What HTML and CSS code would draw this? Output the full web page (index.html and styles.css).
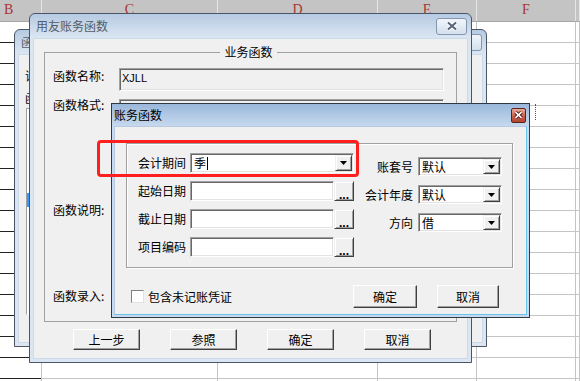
FILE: index.html
```html
<!DOCTYPE html>
<html lang="zh-CN">
  <head>
    <meta charset="UTF-8" />
    <title>账务函数</title>
    <link rel="stylesheet" href="styles.css">
  </head>
  <body>
    <!-- 背后的表格 -->
    <div class="sheet">
      <div class="sheet-head">
        <div class="col col-b">B</div>
        <div class="col col-c">C</div>
        <div class="col col-d">D</div>
        <div class="col col-e">E</div>
        <div class="col col-f">F</div>
        <div class="col col-g"></div>
      </div>
      <div class="sheet-body">
        <div class="col col-b"></div>
        <div class="col col-c"></div>
        <div class="col col-d"></div>
        <div class="col col-e"></div>
        <div class="col col-f"></div>
        <div class="col col-g"></div>
      </div>
    </div>
    <div class="page-break"></div>

    <!-- 函数向导（被挡住的窗口） -->
    <div class="win win-back">
      <div class="titlebar">
        <span class="title">函数</span>
        <span class="close">
          <svg width="12" height="10" viewBox="0 0 12 10"><path d="M2 1.5L10 8.5M10 1.5L2 8.5" stroke="#fff" stroke-width="4"/><path d="M2 1.5L10 8.5M10 1.5L2 8.5" stroke="#56657a" stroke-width="2"/></svg>
        </span>
      </div>
      <div class="client back-client">
        <div class="back-label">请选</div>
        <div class="back-label back-label-last">函数</div>
        <ul class="list">
          <li></li>
          <li></li>
          <li></li>
          <li></li>
          <li></li>
          <li></li>
          <li class="sel"></li>
          <li></li>
        </ul>
      </div>
    </div>

    <!-- 用友账务函数 -->
    <div class="win win-main">
      <div class="titlebar">
        <span class="title">用友账务函数</span>
        <span class="close">
          <svg width="12" height="10" viewBox="0 0 12 10"><path d="M2 1.5L10 8.5M10 1.5L2 8.5" stroke="#fff" stroke-width="4"/><path d="M2 1.5L10 8.5M10 1.5L2 8.5" stroke="#56657a" stroke-width="2"/></svg>
        </span>
      </div>
      <div class="client main-client">
        <fieldset class="group">
          <legend>业务函数</legend>
          <div class="form-grid">
            <span class="lbl">函数名称:</span>
            <div class="edit edit-name">XJLL</div>
            <span class="lbl lbl-up">函数格式:</span>
            <div class="edit edit-format">现金流量项目金额(方向,项目编码,会计期间,账套号,会计年度)</div>
            <span class="lbl lbl-mid">函数说明:</span>
            <div class="edit edit-desc"></div>
            <span class="lbl lbl-mid">函数录入:</span>
            <div class="edit edit-entry"></div>
          </div>
        </fieldset>
        <div class="main-buttons">
          <button class="btn">上一步</button>
          <button class="btn">参照</button>
          <button class="btn">确定</button>
          <button class="btn">取消</button>
        </div>
      </div>
    </div>

    <!-- 账务函数 -->
    <div class="win win-dlg">
      <div class="titlebar">
        <span class="title">账务函数</span>
        <span class="close close-red">
          <svg width="9" height="8" viewBox="0 0 9 8"><path d="M1.5 1.2L7.5 6.8M7.5 1.2L1.5 6.8" stroke="#4a1a14" stroke-width="3.4"/><path d="M1.5 1.2L7.5 6.8M7.5 1.2L1.5 6.8" stroke="#fff" stroke-width="1.6"/></svg>
        </span>
      </div>
      <div class="client dlg-client">
        <div class="dlg-group">
          <div class="dlg-left">
            <span class="lbl">会计期间</span>
            <div class="edit combo">
              <span class="combo-text">季<span class="caret"></span></span>
              <span class="drop"><svg width="7" height="4" viewBox="0 0 7 4"><path d="M0 0h7L3.5 4z"/></svg></span>
            </div>
            <span class="lbl">起始日期</span>
            <div class="picker"><div class="edit"></div><button class="dots">...</button></div>
            <span class="lbl">截止日期</span>
            <div class="picker"><div class="edit"></div><button class="dots">...</button></div>
            <span class="lbl">项目编码</span>
            <div class="picker"><div class="edit"></div><button class="dots">...</button></div>
          </div>
          <div class="dlg-right">
            <span class="lbl">账套号</span>
            <div class="edit combo">
              <span class="combo-text">默认</span>
              <span class="drop"><svg width="7" height="4" viewBox="0 0 7 4"><path d="M0 0h7L3.5 4z"/></svg></span>
            </div>
            <span class="lbl">会计年度</span>
            <div class="edit combo">
              <span class="combo-text">默认</span>
              <span class="drop"><svg width="7" height="4" viewBox="0 0 7 4"><path d="M0 0h7L3.5 4z"/></svg></span>
            </div>
            <span class="lbl">方向</span>
            <div class="edit combo">
              <span class="combo-text">借</span>
              <span class="drop"><svg width="7" height="4" viewBox="0 0 7 4"><path d="M0 0h7L3.5 4z"/></svg></span>
            </div>
          </div>
        </div>
        <div class="dlg-bottom">
          <label class="check"><input type="checkbox">包含未记账凭证</label>
          <button class="btn btn-ok">确定</button>
          <button class="btn btn-cancel">取消</button>
        </div>
      </div>
    </div>

    <div class="mark"></div>
  </body>
</html>
```

FILE: styles.css
```css
* {
  box-sizing: border-box;
}
body {
  margin: 0;
  width: 580px;
  height: 381px;
  overflow: hidden;
  position: relative;
  background: #fff;
  font-family: "Noto Sans CJK SC", sans-serif;
  font-size: 12px;
  line-height: 16px;
  color: #000;
}

/* 表格 */
.sheet {
  display: flex;
  flex-direction: column;
  height: 100%;
}
.sheet-head {
  display: flex;
  height: 22px;
  background: #c4c4c4;
  border-bottom: 1px solid #a6a6a6;
  font-family: "Liberation Serif", serif;
  font-size: 14px;
  line-height: 19px;
  color: #a83434;
}
.sheet-head .col {
  border-right: 1px solid #e6e6e6;
  text-align: center;
}
.sheet-head .col-b {
  text-align: left;
  padding-left: 4px;
}
.sheet-body {
  display: flex;
  flex: 1;
}
.sheet-body .col {
  border-right: 1px solid #c4c4c4;
  background: repeating-linear-gradient(to bottom, transparent 0 20px, #c4c4c4 20px 21px);
}
.sheet-body .col-b {
  background: repeating-linear-gradient(to bottom, transparent 0 20px, #222 20px 21px);
}
.col-b { width: 42px; }
.col-c { width: 176px; }
.col-d { width: 160px; }
.col-e { width: 99px; }
.col-f { width: 99px; }
.col-g { flex: 1; }
.page-break {
  position: absolute;
  left: 535px;
  top: 104px;
  height: 16px;
  border-left: 1px dotted #d02020;
}

/* 窗口 */
.win {
  position: absolute;
  display: flex;
  flex-direction: column;
  border: 1px solid #4a5565;
  border-radius: 6px 6px 0 0;
  padding: 0 3px 3px;
  background: linear-gradient(#b6cae2, #dbe6f2 24px);
}
.win-back {
  left: 14px;
  top: 29px;
  width: 473px;
  height: 318px;
}
.win-main {
  left: 29px;
  top: 13px;
  width: 443px;
  height: 350px;
}
.win-dlg {
  left: 111px;
  top: 103px;
  width: 419px;
  height: 215px;
  border-color: #2f3845;
  border-radius: 0;
  padding: 0 2px 2px;
  background: linear-gradient(#9ab7db, #c6d9ee 22px);
}
.titlebar {
  display: flex;
  align-items: center;
  height: 24px;
  padding: 0 1px 0 3px;
  color: #525c68;
}
.win-dlg .titlebar {
  height: 22px;
  padding: 0 1px 0 0;
  color: #000;
}
.title {
  flex: 1;
  white-space: nowrap;
  overflow: hidden;
}
.close {
  display: flex;
  align-items: center;
  justify-content: center;
  width: 31px;
  height: 17px;
  border: 1px solid #8597ae;
  border-radius: 3px;
  background: linear-gradient(#f1f5fa, #d4e0ed);
}
.close-red {
  width: 15px;
  height: 15px;
  border-color: #5a2419;
  border-radius: 2px;
  background: linear-gradient(#e9aa9a, #cc6652 50%, #b4442f);
}
.client {
  flex: 1;
  background: #f0f0f0;
  border: 1px solid #ccd9e8;
}

/* 控件 */
.edit {
  border: 1px solid;
  border-color: #a0a0a0 #fff #fff #a0a0a0;
  box-shadow: inset 1px 1px #696969, inset -1px -1px #e3e3e3;
  background: #fff;
}
.btn {
  height: 21px;
  padding: 0;
  font: inherit;
  color: #000;
  background: #f0f0f0;
  border: 1px solid;
  border-color: #fff #404040 #404040 #fff;
  box-shadow: inset -1px -1px #a0a0a0;
}
.lbl {
  white-space: nowrap;
}

/* 函数向导 */
.back-client {
  padding: 13px 6px 0;
  overflow: hidden;
}
.back-label {
  margin-bottom: 6px;
  white-space: nowrap;
}
.back-label-last {
  margin-bottom: 2px;
}
.list {
  margin: 0 0 0 1px;
  padding: 0;
  list-style: none;
  width: 250px;
  height: 207px;
  background: #fff;
  border: 1px solid;
  border-color: #a0a0a0 #fff #fff #a0a0a0;
}
.list li {
  height: 14px;
}
.list .sel {
  background: #3399ff;
}

/* 用友账务函数 */
.main-client {
  display: flex;
  flex-direction: column;
  padding: 5px 10px 0;
}
.group {
  margin: 0;
  min-width: 0;
  padding: 8px 12px 10px 8px;
  border: 1px solid #a0a0a0;
}
.group legend {
  margin: 0 auto;
  padding: 0 4px;
}
.form-grid {
  display: grid;
  grid-template-columns: 66px 1fr;
  grid-template-rows: 23px 40px 126px 30px;
  row-gap: 8px;
}
.lbl-up {
  margin-top: -2px;
}
.lbl-mid {
  align-self: center;
}
.edit-name {
  background: #f0f0f0;
  padding: 2px 2px 0;
  font-family: "Liberation Sans", sans-serif;
  font-size: 11px;
  line-height: 14px;
}
.edit-format {
  background: #f0f0f0;
  padding: 1px 4px;
  overflow: hidden;
  white-space: nowrap;
}
.main-buttons {
  display: flex;
  gap: 30px;
  margin-top: 7px;
  padding-left: 29px;
}
.main-buttons .btn {
  width: 67px;
}

/* 账务函数 */
.dlg-client {
  padding: 16px 13px 0 11px;
  border-color: #b8cadf #66c3ea #66c3ea #b8cadf;
}
.dlg-group {
  display: flex;
  gap: 11px;
  padding: 9px 10px 10px 11px;
  border: 1px solid #a0a0a0;
  box-shadow: inset 1px 1px #fff, 1px 1px #fff;
}
.dlg-left {
  display: grid;
  grid-template-columns: 48px 164px;
  grid-auto-rows: 20px;
  row-gap: 8px;
  column-gap: 4px;
  align-items: center;
}
.dlg-right {
  display: grid;
  grid-template-columns: 48px 84px;
  grid-auto-rows: 19px;
  row-gap: 9px;
  column-gap: 5px;
  align-items: center;
  align-self: flex-start;
  padding-top: 4px;
}
.dlg-right .lbl {
  text-align: right;
}
.combo {
  display: flex;
  height: 100%;
  padding: 1px;
}
.combo-text {
  flex: 1;
  align-self: center;
  padding-left: 2px;
}
.caret {
  display: inline-block;
  width: 1px;
  height: 13px;
  margin-left: 1px;
  vertical-align: -2px;
  background: #000;
}
.drop {
  display: flex;
  align-items: center;
  justify-content: center;
  width: 17px;
  background: #f0f0f0;
  border: 1px solid;
  border-color: #f0f0f0 #404040 #404040 #f0f0f0;
  box-shadow: inset 1px 1px #fff, inset -1px -1px #a0a0a0;
}
.picker {
  display: flex;
  height: 100%;
}
.picker .edit {
  flex: 1;
}
.dots {
  width: 20px;
  padding: 6px 0 0;
  font-family: "Liberation Sans", sans-serif;
  font-size: 12px;
  font-weight: bold;
  color: #000;
  background: #f0f0f0;
  border: 1px solid;
  border-color: #f0f0f0 #404040 #404040 #f0f0f0;
  box-shadow: inset 1px 1px #fff, inset -1px -1px #a0a0a0;
}
.dlg-bottom {
  display: flex;
  align-items: center;
  margin-top: 17px;
  padding: 0 14px 0 5px;
}
.check {
  display: flex;
  align-items: center;
  gap: 4px;
}
.check input {
  appearance: none;
  width: 13px;
  height: 13px;
  margin: 0;
  background: #fff;
  border: 1px solid;
  border-color: #808080 #e3e3e3 #e3e3e3 #808080;
}
.btn-ok {
  margin-left: auto;
  width: 64px;
  height: 23px;
}
.btn-cancel {
  margin-left: 20px;
  width: 62px;
  height: 23px;
}

/* 红色标注框 */
.mark {
  position: absolute;
  left: 97px;
  top: 140px;
  width: 262px;
  height: 37px;
  border: 3px solid #ff1f1f;
  border-radius: 4px;
}
```
